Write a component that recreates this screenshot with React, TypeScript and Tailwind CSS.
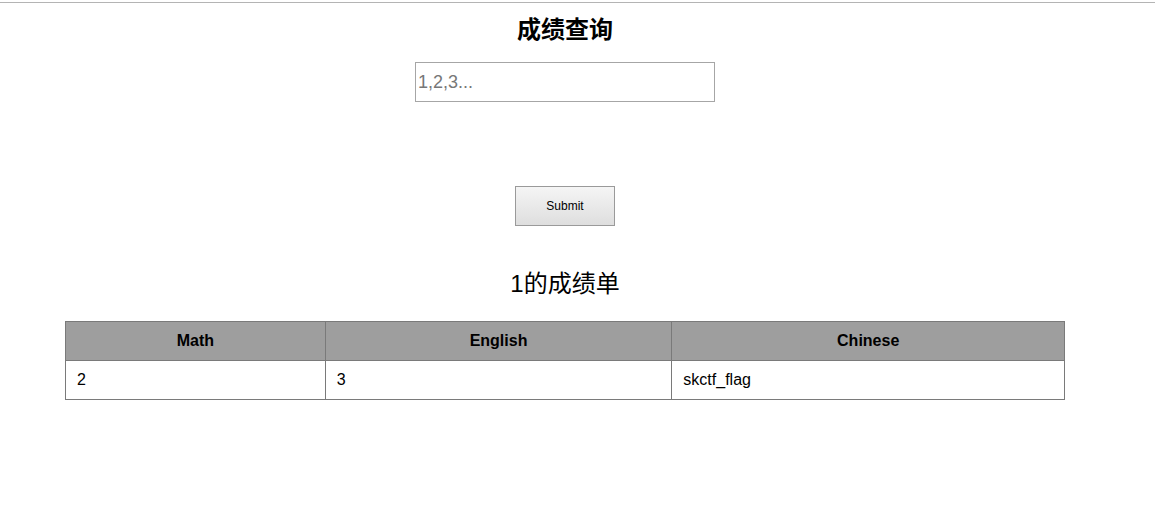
export default function App() {
  const cols = [
    { name: "Math", value: "2", w: "w-[260px]" },
    { name: "English", value: "3", w: "w-[347px]" },
    { name: "Chinese", value: "skctf_flag", w: "w-[393px]" },
  ];

  return (
    <div className="min-h-[505px] bg-white font-['Liberation_Sans','Noto_Sans_CJK_SC',sans-serif] text-black">
      <div className="pt-[2px]">
        <div className="h-px bg-[#b4b4b4]" />
      </div>

      <div className="w-[1130px]">
        {/* 查询表单 */}
        <div className="flex flex-col items-center">
          <h1 className="mt-[10px] h-[34px] text-[24px] font-bold leading-[34px]">成绩查询</h1>
          <input
            type="text"
            placeholder="1,2,3..."
            className="mt-[15px] h-[40px] w-[300px] border border-[#a6a6a6] px-[2px] text-[18px] outline-none placeholder:text-[#777]"
          />
          <button className="mt-[84px] h-[40px] w-[100px] border border-[#9a9a9a] bg-gradient-to-b from-[#f5f5f5] to-[#dedede] text-[12px] text-black">
            Submit
          </button>
          <h2 className="mt-[43px] h-[30px] text-[24px] leading-[30px]">1的成绩单</h2>
        </div>

        {/* 成绩表 */}
        <div className="mt-[22px] flex justify-center">
          <table className="w-[1000px] border-collapse text-[16px]">
            <thead>
              <tr className="bg-[#9e9e9e]">
                {cols.map((c) => (
                  <th key={c.name} className={`${c.w} h-[39px] border border-[#7a7a7a] text-center font-bold`}>
                    {c.name}
                  </th>
                ))}
              </tr>
            </thead>
            <tbody>
              <tr>
                {cols.map((c) => (
                  <td key={c.name} className="h-[39px] border border-[#7a7a7a] px-[11px] text-left">
                    {c.value}
                  </td>
                ))}
              </tr>
            </tbody>
          </table>
        </div>
      </div>
    </div>
  );
}
